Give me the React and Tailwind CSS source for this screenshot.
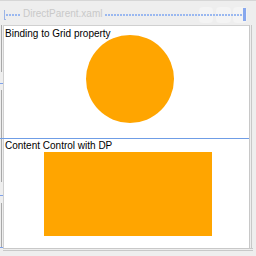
export default function App() {
  const font = { fontFamily: '"Liberation Sans", Arial, sans-serif' };
  return (
    <div className="w-[256px] h-[256px] bg-[#eeeeee] overflow-hidden flex flex-col border-t border-[#d6d6d6]" style={font}>
      {/* top ruler bar */}
      <div className="h-[24px] shrink-0 relative flex items-center pl-[4px] pr-[10px] pt-[3px]">
        <div className="absolute left-[199px] top-[6px] w-[14px] h-[16px] bg-[#f4f4f4] rounded-sm" />
        <div className="absolute left-[216px] top-[6px] w-[15px] h-[16px] bg-[#f4f4f4] rounded-sm" />
        <div className="absolute left-[233px] top-[6px] w-[14px] h-[16px] bg-[#f4f4f4] rounded-sm" />
        <div className="relative w-[2px] h-[10px] border-l border-b border-[#9db5e6]" />
        <div className="relative flex-1 h-[2px] bg-[repeating-linear-gradient(90deg,#9ab8f0_0px,#9ab8f0_2px,transparent_2px,transparent_3px)]">
          <div className="absolute left-[15px] -top-[7px] px-[2px] bg-[#eeeeee] text-[10px] leading-[14px] text-[#c9c9c9]">DirectParent.xaml</div>
        </div>
        <div className="relative w-[3px] h-[13px] bg-[#88a8ee]" />
      </div>
      {/* main area */}
      <div className="flex-1 flex min-h-0">
        <div className="w-[3px] shrink-0 flex flex-col">
          <div className="ml-[1px] w-px h-[47px] bg-[#a8a8a8]" />
          <div className="mt-[11px] w-[3px] h-px bg-[#7fa2ea]" />
          <div className="mt-[6px] ml-[1px] w-px h-[93px] bg-[#a8a8a8]" />
          <div className="mt-[13px] w-[3px] h-px bg-[#7fa2ea]" />
          <div className="mt-[7px] ml-[1px] w-px h-[44px] bg-[#a8a8a8]" />
          <div className="w-[3px] h-px bg-[#7fa2ea]" />
        </div>
        <div className="w-[246px] h-[223px] bg-white border-t border-l border-[#d0d0d0] flex flex-col">
          <div className="h-[112px] flex flex-col">
            <div className="text-[10px] leading-[12px] text-black pl-[1px] pt-[2px]">Binding to Grid property</div>
            <div className="flex justify-center pl-[7px] -mt-[5px]">
              <div className="w-[88px] h-[88px] rounded-full bg-[#ffa500]" />
            </div>
          </div>
          <div className="flex-1 border-t border-[#6f9de6] -ml-[4px] pl-[4px] flex flex-col">
            <div className="text-[10px] leading-[12px] text-black pl-[1px] pt-[1px]">Content Control with DP</div>
            <div className="pl-[40px]">
              <div className="w-[168px] h-[84px] bg-[#ffa500]" />
            </div>
          </div>
        </div>
        <div className="flex-1 flex">
          <div className="w-[3px] border-l border-r border-[#c8c8c8]" />
        </div>
      </div>
      <div className="h-[8px] shrink-0 pl-[3px]">
        <div className="w-[250px] h-[3px] border-t border-b border-[#c8c8c8]" />
      </div>
    </div>
  );
}
